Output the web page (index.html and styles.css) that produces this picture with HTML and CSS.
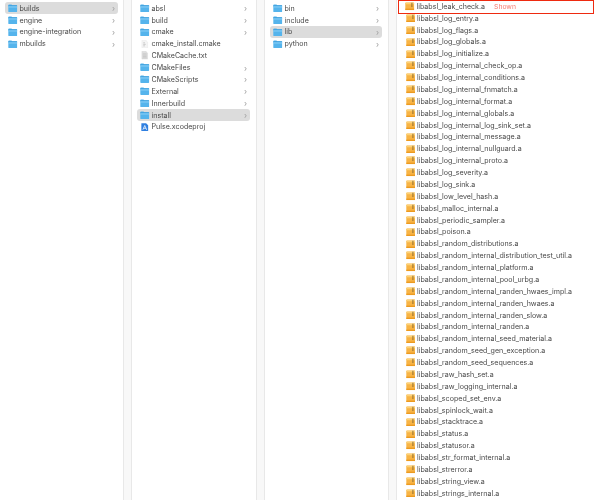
FILE: index.html
```html
<!DOCTYPE html>
<html lang="en">
<head>
    <meta charset="UTF-8">
    <title>Finder columns</title>
    <link rel="stylesheet" href="styles.css">
</head>
<body>

<svg class="icon-defs" width="0" height="0">
    <symbol id="folder" viewBox="0 0 10 9">
        <path d="M0.3 1.2q0-.8.8-.8h2.5l.9 1h4.4q.8 0 .8.8v5.6q0 .8-.8.8H1.1q-.8 0-.8-.8z" fill="#55b4ec"/>
        <rect x="0.3" y="1.4" width="9.4" height="1.2" fill="#3d9fdc"/>
        <rect x="0.3" y="2.6" width="9.4" height="1" fill="#93d5f9"/>
    </symbol>
    <symbol id="archive" viewBox="0 0 10 9">
        <path d="M0.3 1.2q0-.8.8-.8h7.8q.8 0 .8.8v6.6q0 .8-.8.8H1.1q-.8 0-.8-.8z" fill="#f8b445"/>
        <rect x="0.3" y="0.8" width="9.4" height="1.6" fill="#fcd277"/>
        <rect x="6.8" y="0.8" width="1" height="4.6" fill="#8a6a2e"/>
        <rect x="0.3" y="7" width="9.4" height="1.6" fill="#ec9a1f"/>
    </symbol>
    <symbol id="doc" viewBox="0 0 10 9">
        <path d="M2 0.3h4.2l1.8 1.8v6.6H2z" fill="#f4f4f4" stroke="#dedede" stroke-width=".4"/>
        <path d="M3.4 3h1.8M3.4 4.6h2.6M3.4 6.2h1.8" stroke="#a8a8a8" stroke-width=".6"/>
    </symbol>
    <symbol id="text" viewBox="0 0 10 9">
        <path d="M2 0.3h4.2l1.8 1.8v6.6H2z" fill="#dedede" stroke="#cfcfcf" stroke-width=".4"/>
        <path d="M3 3h4M3 4.4h4M3 5.8h4M3 7.2h4" stroke="#b5b5b5" stroke-width=".5"/>
    </symbol>
    <symbol id="xcode" viewBox="0 0 10 9">
        <path d="M1.4 0.3h5l2.2 2.1v6.3H1.4z" fill="#2f7fe0"/>
        <path d="M3 7.2 5 2.6l2 4.6M3.8 5.6h2.4" fill="none" stroke="#fff" stroke-width=".8"/>
    </symbol>
</svg>

<div class="finder">
    <div class="column column-roots">
        <div class="row selected"><svg class="icon"><use href="#folder"/></svg><span class="name">builds</span><span class="chevron">›</span></div>
        <div class="row"><svg class="icon"><use href="#folder"/></svg><span class="name">engine</span><span class="chevron">›</span></div>
        <div class="row"><svg class="icon"><use href="#folder"/></svg><span class="name">engine-integration</span><span class="chevron">›</span></div>
        <div class="row"><svg class="icon"><use href="#folder"/></svg><span class="name">mbuilds</span><span class="chevron">›</span></div>
    </div>
    <div class="strip"></div>
    <div class="column column-builds">
        <div class="row"><svg class="icon"><use href="#folder"/></svg><span class="name">absl</span><span class="chevron">›</span></div>
        <div class="row"><svg class="icon"><use href="#folder"/></svg><span class="name">build</span><span class="chevron">›</span></div>
        <div class="row"><svg class="icon"><use href="#folder"/></svg><span class="name">cmake</span><span class="chevron">›</span></div>
        <div class="row"><svg class="icon"><use href="#doc"/></svg><span class="name">cmake_install.cmake</span></div>
        <div class="row"><svg class="icon"><use href="#text"/></svg><span class="name">CMakeCache.txt</span></div>
        <div class="row"><svg class="icon"><use href="#folder"/></svg><span class="name">CMakeFiles</span><span class="chevron">›</span></div>
        <div class="row"><svg class="icon"><use href="#folder"/></svg><span class="name">CMakeScripts</span><span class="chevron">›</span></div>
        <div class="row"><svg class="icon"><use href="#folder"/></svg><span class="name">External</span><span class="chevron">›</span></div>
        <div class="row"><svg class="icon"><use href="#folder"/></svg><span class="name">Innerbuild</span><span class="chevron">›</span></div>
        <div class="row selected"><svg class="icon"><use href="#folder"/></svg><span class="name">install</span><span class="chevron">›</span></div>
        <div class="row"><svg class="icon"><use href="#xcode"/></svg><span class="name">Pulse.xcodeproj</span></div>
    </div>
    <div class="strip"></div>
    <div class="column column-install">
        <div class="row"><svg class="icon"><use href="#folder"/></svg><span class="name">bin</span><span class="chevron">›</span></div>
        <div class="row"><svg class="icon"><use href="#folder"/></svg><span class="name">include</span><span class="chevron">›</span></div>
        <div class="row selected"><svg class="icon"><use href="#folder"/></svg><span class="name">lib</span><span class="chevron">›</span></div>
        <div class="row"><svg class="icon"><use href="#folder"/></svg><span class="name">python</span><span class="chevron">›</span></div>
    </div>
    <div class="strip"></div>
    <div class="column column-lib">
        <div class="row callout"><svg class="icon"><use href="#archive"/></svg><span class="name">libabsl_leak_check.a</span><span class="note">Shown</span></div>
        <div class="row"><svg class="icon"><use href="#archive"/></svg><span class="name">libabsl_log_entry.a</span></div>
        <div class="row"><svg class="icon"><use href="#archive"/></svg><span class="name">libabsl_log_flags.a</span></div>
        <div class="row"><svg class="icon"><use href="#archive"/></svg><span class="name">libabsl_log_globals.a</span></div>
        <div class="row"><svg class="icon"><use href="#archive"/></svg><span class="name">libabsl_log_initialize.a</span></div>
        <div class="row"><svg class="icon"><use href="#archive"/></svg><span class="name">libabsl_log_internal_check_op.a</span></div>
        <div class="row"><svg class="icon"><use href="#archive"/></svg><span class="name">libabsl_log_internal_conditions.a</span></div>
        <div class="row"><svg class="icon"><use href="#archive"/></svg><span class="name">libabsl_log_internal_fnmatch.a</span></div>
        <div class="row"><svg class="icon"><use href="#archive"/></svg><span class="name">libabsl_log_internal_format.a</span></div>
        <div class="row"><svg class="icon"><use href="#archive"/></svg><span class="name">libabsl_log_internal_globals.a</span></div>
        <div class="row"><svg class="icon"><use href="#archive"/></svg><span class="name">libabsl_log_internal_log_sink_set.a</span></div>
        <div class="row"><svg class="icon"><use href="#archive"/></svg><span class="name">libabsl_log_internal_message.a</span></div>
        <div class="row"><svg class="icon"><use href="#archive"/></svg><span class="name">libabsl_log_internal_nullguard.a</span></div>
        <div class="row"><svg class="icon"><use href="#archive"/></svg><span class="name">libabsl_log_internal_proto.a</span></div>
        <div class="row"><svg class="icon"><use href="#archive"/></svg><span class="name">libabsl_log_severity.a</span></div>
        <div class="row"><svg class="icon"><use href="#archive"/></svg><span class="name">libabsl_log_sink.a</span></div>
        <div class="row"><svg class="icon"><use href="#archive"/></svg><span class="name">libabsl_low_level_hash.a</span></div>
        <div class="row"><svg class="icon"><use href="#archive"/></svg><span class="name">libabsl_malloc_internal.a</span></div>
        <div class="row"><svg class="icon"><use href="#archive"/></svg><span class="name">libabsl_periodic_sampler.a</span></div>
        <div class="row"><svg class="icon"><use href="#archive"/></svg><span class="name">libabsl_poison.a</span></div>
        <div class="row"><svg class="icon"><use href="#archive"/></svg><span class="name">libabsl_random_distributions.a</span></div>
        <div class="row"><svg class="icon"><use href="#archive"/></svg><span class="name">libabsl_random_internal_distribution_test_util.a</span></div>
        <div class="row"><svg class="icon"><use href="#archive"/></svg><span class="name">libabsl_random_internal_platform.a</span></div>
        <div class="row"><svg class="icon"><use href="#archive"/></svg><span class="name">libabsl_random_internal_pool_urbg.a</span></div>
        <div class="row"><svg class="icon"><use href="#archive"/></svg><span class="name">libabsl_random_internal_randen_hwaes_impl.a</span></div>
        <div class="row"><svg class="icon"><use href="#archive"/></svg><span class="name">libabsl_random_internal_randen_hwaes.a</span></div>
        <div class="row"><svg class="icon"><use href="#archive"/></svg><span class="name">libabsl_random_internal_randen_slow.a</span></div>
        <div class="row"><svg class="icon"><use href="#archive"/></svg><span class="name">libabsl_random_internal_randen.a</span></div>
        <div class="row"><svg class="icon"><use href="#archive"/></svg><span class="name">libabsl_random_internal_seed_material.a</span></div>
        <div class="row"><svg class="icon"><use href="#archive"/></svg><span class="name">libabsl_random_seed_gen_exception.a</span></div>
        <div class="row"><svg class="icon"><use href="#archive"/></svg><span class="name">libabsl_random_seed_sequences.a</span></div>
        <div class="row"><svg class="icon"><use href="#archive"/></svg><span class="name">libabsl_raw_hash_set.a</span></div>
        <div class="row"><svg class="icon"><use href="#archive"/></svg><span class="name">libabsl_raw_logging_internal.a</span></div>
        <div class="row"><svg class="icon"><use href="#archive"/></svg><span class="name">libabsl_scoped_set_env.a</span></div>
        <div class="row"><svg class="icon"><use href="#archive"/></svg><span class="name">libabsl_spinlock_wait.a</span></div>
        <div class="row"><svg class="icon"><use href="#archive"/></svg><span class="name">libabsl_stacktrace.a</span></div>
        <div class="row"><svg class="icon"><use href="#archive"/></svg><span class="name">libabsl_status.a</span></div>
        <div class="row"><svg class="icon"><use href="#archive"/></svg><span class="name">libabsl_statusor.a</span></div>
        <div class="row"><svg class="icon"><use href="#archive"/></svg><span class="name">libabsl_str_format_internal.a</span></div>
        <div class="row"><svg class="icon"><use href="#archive"/></svg><span class="name">libabsl_strerror.a</span></div>
        <div class="row"><svg class="icon"><use href="#archive"/></svg><span class="name">libabsl_string_view.a</span></div>
        <div class="row"><svg class="icon"><use href="#archive"/></svg><span class="name">libabsl_strings_internal.a</span></div>
    </div>
</div>

</body>
</html>
```

FILE: styles.css
```css
body {
    margin: 0;
    background: white;
    font-family: Inter, "Liberation Sans", sans-serif;
    font-size: 7.1px;
    color: #484848;
    overflow: hidden;
}

.icon-defs {
    position: absolute;
}

.finder {
    display: flex;
    width: 594px;
    height: 500px;
    overflow: hidden;
    filter: blur(0.3px);
}

.column {
    padding-top: 2.3px;
    box-sizing: border-box;
    flex-shrink: 0;
}

.column-roots {
    width: 123px;
    padding-left: 5px;
    padding-right: 5px;
}

.column-builds {
    width: 124.5px;
    padding-left: 5.5px;
    padding-right: 6px;
}

.column-install {
    width: 123.5px;
    padding-left: 5.5px;
    padding-right: 6px;
}

.column-lib {
    flex: 1;
    padding-top: 0;
    padding-left: 1.5px;
}

.strip {
    width: 8.5px;
    box-sizing: border-box;
    flex-shrink: 0;
    background-color: #f8f8f8;
    border-left: 1px solid #e8e8e8;
    border-right: 1px solid #e8e8e8;
}

.row {
    display: flex;
    align-items: center;
    height: 11.88px;
    padding-left: 3px;
    border-radius: 3px;
    white-space: nowrap;
}

.row.selected {
    background-color: #dcdcdc;
}

.icon {
    width: 9.5px;
    height: 8.5px;
    flex-shrink: 0;
    margin-right: 2px;
}

.column-lib .row {
    padding-left: 7.5px;
}

.name {
    flex: 1;
}

.column-lib .name {
    flex: none;
}

.chevron {
    width: 6px;
    color: #a0a0a0;
    font-size: 8px;
}

.column-lib .row.callout {
    box-sizing: border-box;
    height: 13.6px;
    margin-bottom: -1.3px;
    padding-left: 6px;
    padding-bottom: 1px;
    border: 1.5px solid #ee2a10;
    border-radius: 0;
}

.note {
    margin-left: 9px;
    color: #f77a70;
    font-size: 6.8px;
}
```
